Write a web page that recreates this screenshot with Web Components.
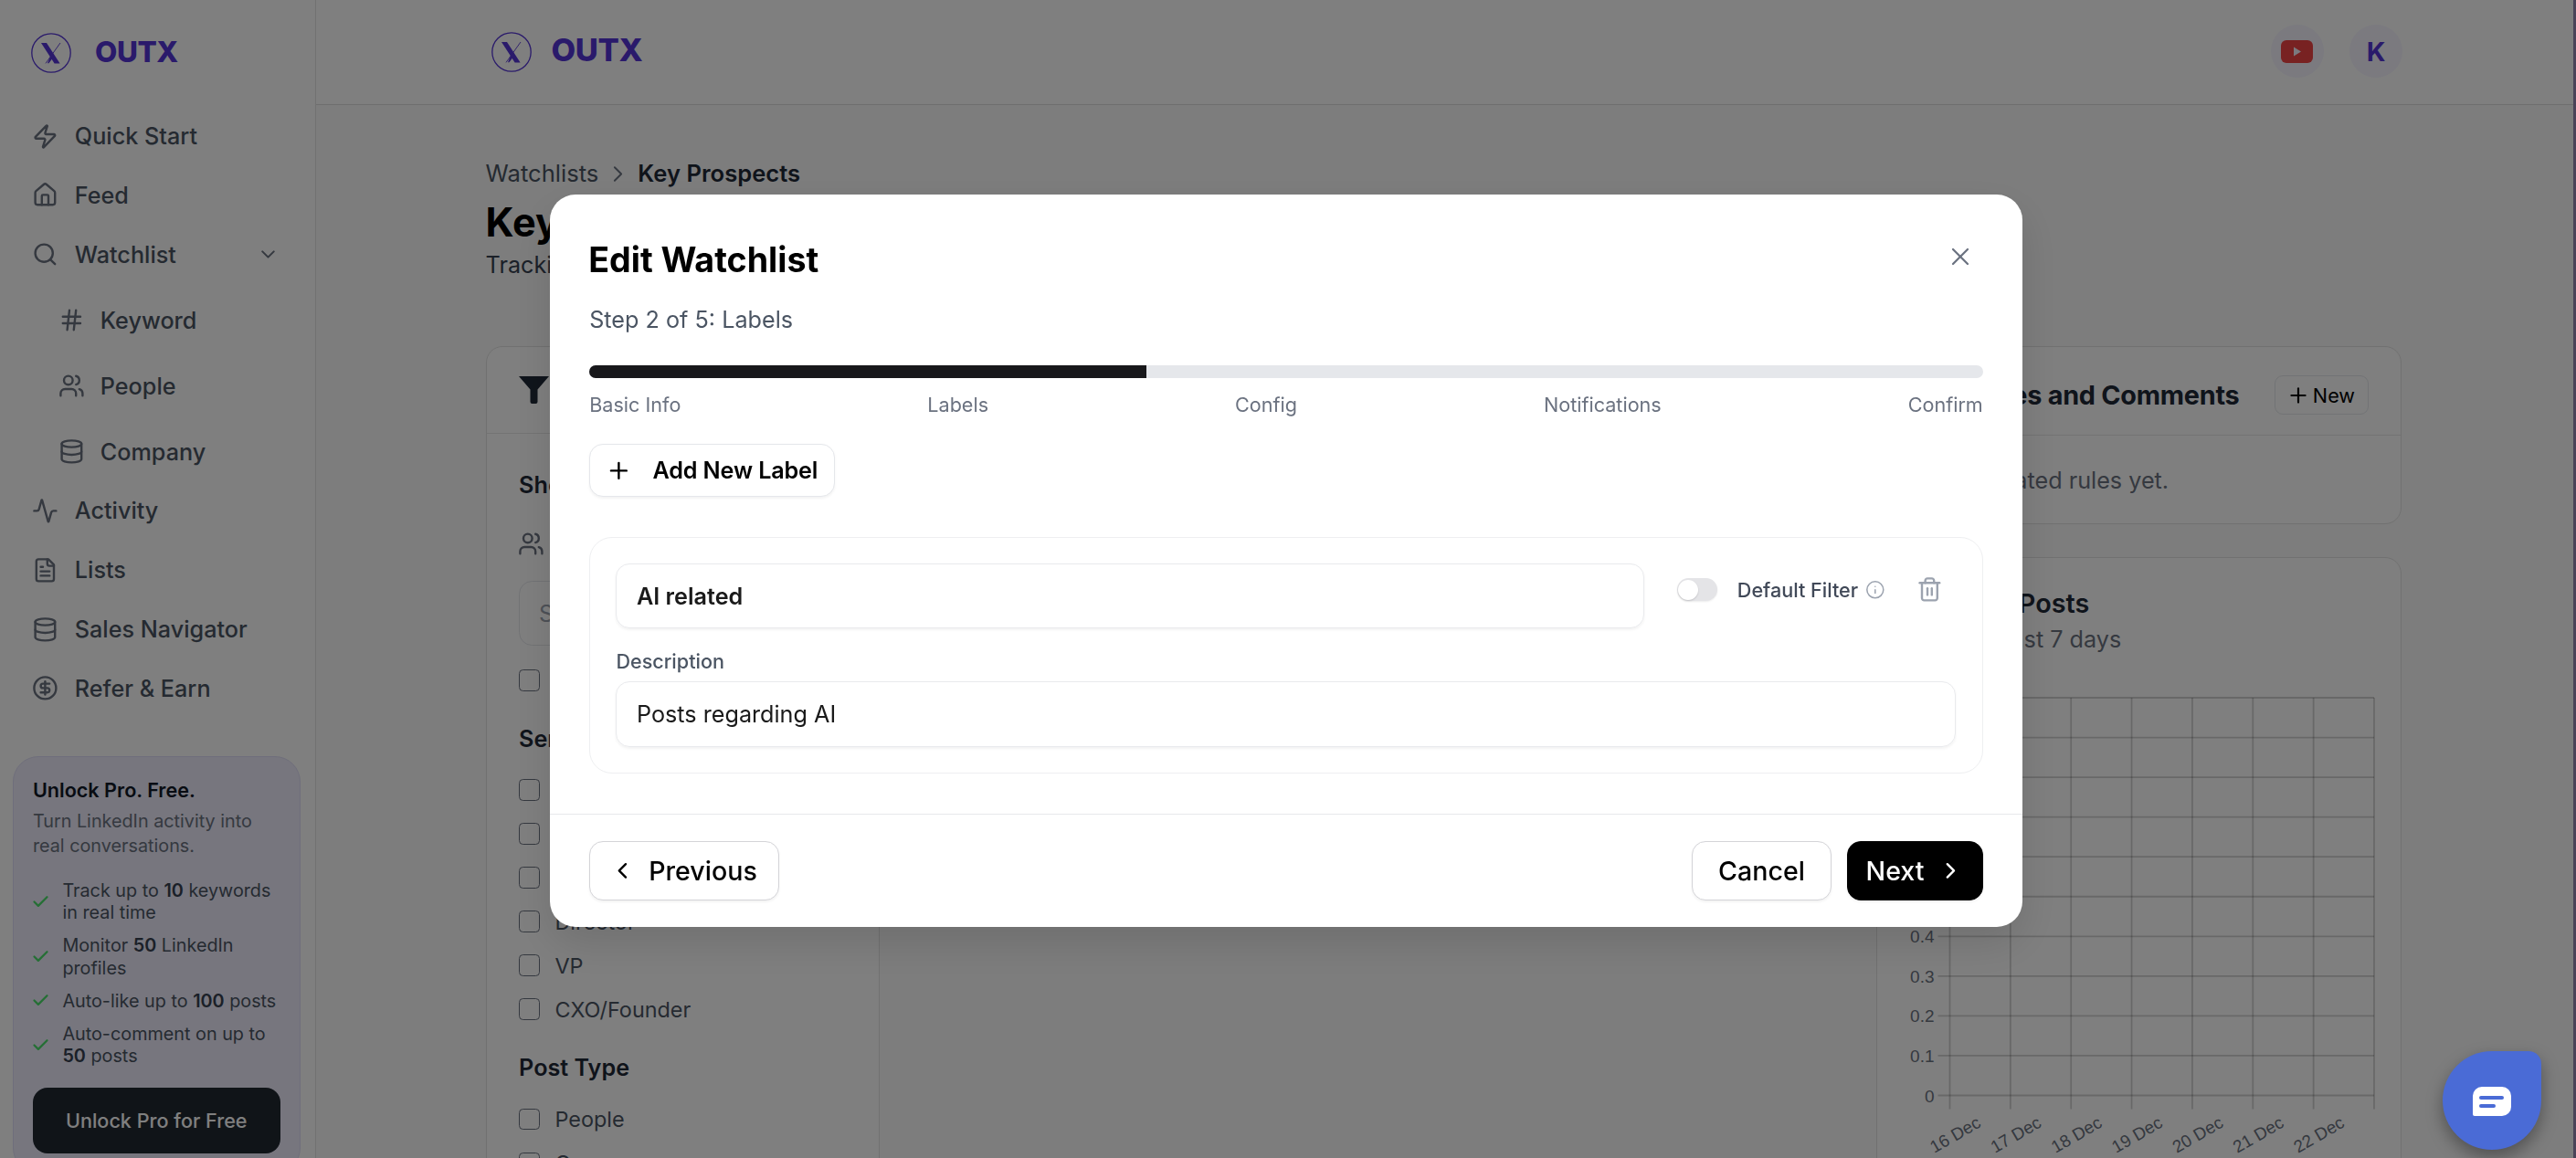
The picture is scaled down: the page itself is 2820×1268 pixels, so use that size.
<!DOCTYPE html>
<html lang="en">
  <head>
    <meta charset="UTF-8" />
    <title>OUTX - Edit Watchlist</title>
    <style>
      html, body { margin: 0; height: 100%; overflow: hidden; background: #fff; }
      body { font-family: Inter, "Noto Sans", sans-serif; }
      .shell { display: flex; height: 1268px; overflow: hidden; }
    </style>
  </head>
  <body>
    <div class="shell">
      <app-sidebar></app-sidebar>
      <main-area></main-area>
      <scroll-edge></scroll-edge>
    </div>
    <edit-modal></edit-modal>
    <chat-bubble></chat-bubble>

    <script>
      const ICONS = {
        zap: '<path d="M4 14a1 1 0 0 1-.78-1.63l9.9-10.2a.5.5 0 0 1 .86.46l-1.92 6.02A1 1 0 0 0 13 10h7a1 1 0 0 1 .78 1.63l-9.9 10.2a.5.5 0 0 1-.86-.46l1.92-6.02A1 1 0 0 0 11 14z"/>',
        house: '<path d="M15 21v-8a1 1 0 0 0-1-1h-4a1 1 0 0 0-1 1v8"/><path d="M3 10a2 2 0 0 1 .709-1.528l7-5.999a2 2 0 0 1 2.582 0l7 5.999A2 2 0 0 1 21 10v9a2 2 0 0 1-2 2H5a2 2 0 0 1-2-2z"/>',
        search: '<circle cx="11" cy="11" r="8"/><path d="m21 21-4.3-4.3"/>',
        down: '<path d="m6 9 6 6 6-6"/>',
        hash: '<line x1="4" x2="20" y1="9" y2="9"/><line x1="4" x2="20" y1="15" y2="15"/><line x1="10" x2="8" y1="3" y2="21"/><line x1="16" x2="14" y1="3" y2="21"/>',
        users: '<path d="M16 21v-2a4 4 0 0 0-4-4H6a4 4 0 0 0-4 4v2"/><circle cx="9" cy="7" r="4"/><path d="M22 21v-2a4 4 0 0 0-3-3.87"/><path d="M16 3.13a4 4 0 0 1 0 7.75"/>',
        database: '<ellipse cx="12" cy="5" rx="9" ry="3"/><path d="M3 5V19A9 3 0 0 0 21 19V5"/><path d="M3 12A9 3 0 0 0 21 12"/>',
        activity: '<path d="M22 12h-2.48a2 2 0 0 0-1.93 1.46l-2.35 8.36a.25.25 0 0 1-.48 0L9.24 2.18a.25.25 0 0 0-.48 0l-2.35 8.36A2 2 0 0 1 4.49 12H2"/>',
        file: '<path d="M15 2H6a2 2 0 0 0-2 2v16a2 2 0 0 0 2 2h12a2 2 0 0 0 2-2V7Z"/><path d="M14 2v4a2 2 0 0 0 2 2h4"/><path d="M10 9H8"/><path d="M16 13H8"/><path d="M16 17H8"/>',
        dollar: '<circle cx="12" cy="12" r="10"/><path d="M16 8h-6a2 2 0 1 0 0 4h4a2 2 0 1 1 0 4H8"/><path d="M12 18V6"/>',
        check: '<path d="M20 6 9 17l-5-5"/>',
        plus: '<path d="M5 12h14"/><path d="M12 5v14"/>',
        close: '<path d="M18 6 6 18"/><path d="m6 6 12 12"/>',
        info: '<circle cx="12" cy="12" r="10"/><path d="M12 16v-4"/><path d="M12 8h.01"/>',
        trash: '<path d="M3 6h18"/><path d="M19 6v14c0 1-1 2-2 2H7c-1 0-2-1-2-2V6"/><path d="M8 6V4c0-1 1-2 2-2h4c1 0 2 1 2 2v2"/><line x1="10" x2="10" y1="11" y2="17"/><line x1="14" x2="14" y1="11" y2="17"/>',
        left: '<path d="m15 18-6-6 6-6"/>',
        right: '<path d="m9 18 6-6-6-6"/>',
      }

      // small helper so every class below stays a few lines
      function define(name, css, html) {
        customElements.define(
          name,
          class extends HTMLElement {
            constructor() {
              super()
              const root = this.attachShadow({ mode: 'open' })
              root.innerHTML = `<style>${css}</style>${typeof html === 'function' ? html(this) : html}`
            }
          }
        )
      }

      // icon
      customElements.define(
        'ui-icon',
        class extends HTMLElement {
          connectedCallback() {
            if (this.shadowRoot) return
            const size = this.getAttribute('size') || 28.8
            const stroke = this.getAttribute('stroke') || 2
            this.attachShadow({ mode: 'open' }).innerHTML = `
              <style>:host { display: block; flex: none; width: ${size}px; height: ${size}px; } svg { display: block; }</style>
              <svg xmlns="http://www.w3.org/2000/svg" width="${size}" height="${size}" viewBox="0 0 24 24" fill="none"
                stroke="currentColor" stroke-width="${stroke}" stroke-linecap="round" stroke-linejoin="round">${ICONS[this.getAttribute('name')]}</svg>`
          }
        }
      )

      // logo
      define(
        'outx-logo',
        `:host { display: flex; align-items: center; color: #5535d6; }
         .name { font-weight: 800; letter-spacing: -0.4px; line-height: 1; }
         svg { display: block; flex: none; }`,
        (el) => `
          <svg width="44" height="44" viewBox="0 0 44 44" fill="none">
            <circle cx="22" cy="22" r="21.2" stroke="currentColor" stroke-width="1.3"/>
            <path d="M11 11h6l14.6 22.4h-6z" fill="currentColor"/>
            <path d="M32 11 16 33.4" stroke="currentColor" stroke-width=".9"/>
            <path d="M21.4 25 18 33.2h1.4l4-5.2z" fill="currentColor"/>
          </svg>
          <span class="name" style="font-size:${el.getAttribute('size')}px;margin-left:${el.getAttribute('gap')}px;margin-top:${el.getAttribute('lift')}px">OUTX</span>`
      )

      // sidebar row
      define(
        'nav-item',
        `:host { display: flex; align-items: center; gap: 18px; height: 64.8px; padding-left: 35px; font-size: 25.2px; font-weight: 500; color: #4b5563; }
         :host([sub]) { padding-left: 64px; margin-top: 7.2px; gap: 17px; }
         ui-icon { color: #6b7280; }
         .chev { margin-left: auto; margin-right: 39px; }`,
        (el) => `<ui-icon name="${el.getAttribute('icon')}"></ui-icon><slot></slot>
          ${el.hasAttribute('open') ? '<ui-icon class="chev" name="down" size="25"></ui-icon>' : ''}`
      )

      // bullet in the promo card
      define(
        'promo-item',
        `:host { display: flex; align-items: center; gap: 13px; margin-left: -1.5px; font-size: 19.8px; line-height: 24.5px; color: #4b5563; }
         ui-icon { color: #4ade6a; }
         ::slotted(b) { font-weight: 600; color: #374151; }`,
        `<ui-icon name="check" size="21" stroke="2.6"></ui-icon><span><slot></slot></span>`
      )

      define(
        'promo-card',
        `:host { display: block; margin: 41.6px 16px 0 14.4px; padding: 20px 21px 21.6px 20.5px; background: #eeedfc; border: 1.8px solid #dedcf6; border-radius: 28px; }
         h4 { margin: 0; font-size: 21.6px; line-height: 32px; font-weight: 600; color: #111827; }
         p { margin: 5.5px 0 0; font-size: 19.8px; line-height: 27px; color: #6b7280; }
         .list { display: flex; flex-direction: column; gap: 11.5px; margin-top: 22.5px; }
         .cta { margin-top: 22px; height: 72px; display: flex; align-items: center; justify-content: center; border-radius: 16px; background: #202831; color: #fff; font-size: 21.6px; font-weight: 500; }`,
        `<h4>Unlock Pro. Free.</h4>
         <p>Turn LinkedIn activity into real conversations.</p>
         <div class="list">
           <promo-item>Track up to <b>10</b> keywords in real time</promo-item>
           <promo-item>Monitor <b>50</b> LinkedIn profiles</promo-item>
           <promo-item>Auto-like up to <b>100</b> posts</promo-item>
           <promo-item>Auto-comment on up to <b>50</b> posts</promo-item>
         </div>
         <div class="cta">Unlock Pro for Free</div>`
      )

      define(
        'app-sidebar',
        `:host { display: block; flex: none; box-sizing: border-box; width: 345.6px; height: 1268px; overflow: hidden; background: #fff; border-right: 1.8px solid #e4e4e4; }
         outx-logo { height: 116.6px; padding-left: 34px; box-sizing: border-box; }`,
        `<outx-logo size="31.5" gap="26" lift="-3"></outx-logo>
         <nav-item icon="zap">Quick Start</nav-item>
         <nav-item icon="house">Feed</nav-item>
         <nav-item icon="search" open>Watchlist</nav-item>
         <nav-item icon="hash" sub>Keyword</nav-item>
         <nav-item icon="users" sub>People</nav-item>
         <nav-item icon="database" sub>Company</nav-item>
         <nav-item icon="activity">Activity</nav-item>
         <nav-item icon="file">Lists</nav-item>
         <nav-item icon="database">Sales Navigator</nav-item>
         <nav-item icon="dollar">Refer &amp; Earn</nav-item>
         <promo-card></promo-card>`
      )

      define(
        'app-header',
        `:host { display: flex; align-items: center; justify-content: space-between; box-sizing: border-box; height: 115px; padding: 0 187px 0 192px; background: #fff; border-bottom: 1.8px solid #dedede; }
         .right { display: flex; gap: 28.8px; }
         .round { width: 57.6px; height: 57.6px; border-radius: 50%; background: #f6f5fe; display: flex; align-items: center; justify-content: center; color: #5535d6; font-size: 28.8px; font-weight: 700; margin-top: -2px; }
         svg { display: block; }`,
        `<outx-logo size="34.5" gap="22" lift="-4"></outx-logo>
         <div class="right">
           <div class="round">
             <svg width="35" height="25" viewBox="0 0 35 25"><rect width="35" height="25" rx="6" fill="#f04444"/><path d="M14 7.5v10l8-5z" fill="#f6f5fe"/></svg>
           </div>
           <div class="round">K</div>
         </div>`
      )

      define(
        'check-row',
        `:host { display: flex; align-items: center; gap: 16px; height: 36px; font-size: 23.4px; color: #4b5563; }
         i { display: block; flex: none; box-sizing: border-box; width: 23.4px; height: 23.4px; border: 1.8px solid #6b7280; border-radius: 4.5px; background: #fff; }`,
        `<i></i><slot></slot>`
      )

      define(
        'filter-panel',
        `:host { display: block; flex: none; box-sizing: border-box; width: 431px; height: 1000px; background: #fff; border: 1.8px solid #e2e2e2; border-radius: 18px; }
         .top { display: flex; align-items: center; gap: 16px; height: 95px; box-sizing: border-box; padding-left: 35px; border-bottom: 1.8px solid #e6e6e6; color: #1f2937; font-size: 28.8px; font-weight: 600; }
         svg { display: block; }
         .body { padding: 38px 35px 0 35.5px; }
         h5 { margin: 0; font-size: 25.2px; line-height: 36px; font-weight: 600; color: #1f2937; }
         .who { display: flex; align-items: center; gap: 12px; height: 36px; margin-top: 28px; font-size: 25.2px; color: #4b5563; }
         .who ui-icon { color: #6b7280; margin-left: -1px; }
         .input { margin-top: 23px; height: 71px; box-sizing: border-box; display: flex; align-items: center; padding-left: 21px; border: 1.8px solid #e5e7eb; border-radius: 14.4px; font-size: 25.2px; color: #9ca3af; }
         .stack { display: flex; flex-direction: column; gap: 12px; margin-top: 20px; }
         h5.gap { margin-top: 28px; }`,
        `<div class="top">
           <svg width="33" height="30" viewBox="0 0 33 30"><path d="M0 0h33L20.5 14.5V28a2 2 0 0 1-2 2h-4a2 2 0 0 1-2-2V14.5z" fill="#1f2937"/></svg>
           Filters
         </div>
         <div class="body">
           <h5>Show</h5>
           <div class="who"><ui-icon name="users"></ui-icon>People</div>
           <div class="input">Search</div>
           <div class="stack"><check-row>All</check-row></div>
           <h5 class="gap">Seniority</h5>
           <div class="stack">
             <check-row>Entry</check-row>
             <check-row>Senior</check-row>
             <check-row>Manager</check-row>
             <check-row>Director</check-row>
             <check-row>VP</check-row>
             <check-row>CXO/Founder</check-row>
           </div>
           <h5 class="gap">Post Type</h5>
           <div class="stack" style="margin-top:20.5px">
             <check-row>People</check-row>
             <check-row>Company</check-row>
           </div>
         </div>`
      )

      define(
        'rules-card',
        `:host { display: block; box-sizing: border-box; background: #fff; border: 1.8px solid #e2e2e2; border-radius: 18px; }
         .top { display: flex; align-items: center; justify-content: space-between; height: 97.2px; box-sizing: border-box; padding: 9px 35px 0; border-bottom: 1.8px solid #e6e6e6; }
         h3 { margin: 0; font-size: 28.8px; font-weight: 700; letter-spacing: -0.25px; color: #1f2937; white-space: nowrap; }
         .new { display: flex; align-items: center; gap: 3px; height: 43.2px; box-sizing: border-box; padding: 0 14px 0 12px; border: 1.8px solid #e5e7eb; border-radius: 9px; font-size: 21.6px; font-weight: 400; color: #000; }
         .none { padding: 31px 35px 29px; font-size: 25.2px; line-height: 36px; color: #6b7280; white-space: nowrap; }`,
        `<div class="top"><h3>Auto Likes and Comments</h3>
           <div class="new"><ui-icon name="plus" size="26"></ui-icon>New</div>
         </div>
         <div class="none">No automated rules yet.</div>`
      )

      define(
        'posts-card',
        `:host { display: block; box-sizing: border-box; height: 760px; padding-top: 30px; background: #fff; border: 1.8px solid #e2e2e2; border-radius: 18px; }
         h3 { margin: 0; padding-left: 35px; font-size: 28.8px; line-height: 40px; font-weight: 600; color: #1f2937; }
         p { margin: 1px 0 0; padding-left: 28px; font-size: 25.2px; line-height: 36px; color: #6b7280; }
         svg { display: block; margin-top: 12px; }`,
        () => {
          // plot box inside the svg
          const x0 = 79.5, x1 = 544, y0 = 34, y1 = 469.5
          const rows = 10, cols = 7
          const dx = (x1 - x0) / cols, dy = (y1 - y0) / rows
          let grid = '', labels = ''
          for (let i = 0; i <= rows; i++) {
            const y = y0 + i * dy
            grid += `<line x1="${x0 - 13}" x2="${x1}" y1="${y}" y2="${y}"/>`
            const v = (rows - i) / 10
            labels += `<text x="${x0 - 17}" y="${y + 7}" text-anchor="end">${v === 0 ? '0' : v === 1 ? '1.0' : v.toFixed(1)}</text>`
          }
          for (let i = 0; i <= cols; i++) {
            const x = x0 + i * dx
            grid += `<line x1="${x}" x2="${x}" y1="${y0}" y2="${y1 + 15}"/>`
            if (i < cols) labels += `<text transform="translate(${x + dx / 2 + 2} 503) rotate(-30)" text-anchor="end">${16 + i} Dec</text>`
          }
          return `<h3>Tracked Posts</h3><p>From the last 7 days</p>
            <svg width="575" height="540" viewBox="0 0 575 540">
              <g stroke="#000" stroke-opacity=".18" stroke-width="1.8">${grid}</g>
              <g font-family="'Liberation Sans', Arial, sans-serif" font-size="19" fill="#6b7280">${labels}</g>
            </svg>`
        }
      )

      define(
        'main-area',
        `:host { display: block; flex: 1; min-width: 0; height: 1268px; overflow: hidden; background: #fafbfa; }
         .page { padding: 57px 188px 0 186px; }
         .crumb { display: flex; align-items: center; gap: 7px; font-size: 25.6px; line-height: 36px; color: #4b5563; }
         .crumb b { font-weight: 600; color: #1f2937; }
         .crumb ui-icon { color: #6b7280; }
         h1 { margin: 8px 0 0; font-size: 43.2px; line-height: 54px; font-weight: 700; color: #000; }
         .sub { margin: 2px 0 0; font-size: 25.2px; line-height: 36px; color: #374151; }
         .cols { display: flex; justify-content: space-between; margin-top: 71px; }
         .right { display: flex; flex-direction: column; gap: 36px; width: 575px; flex: none; }`,
        `<app-header></app-header>
         <div class="page">
           <div class="crumb">Watchlists<ui-icon name="right" size="29" stroke="1.6"></ui-icon><b>Key Prospects</b></div>
           <h1>Key Prospects</h1>
           <p class="sub">Tracking</p>
           <div class="cols">
             <filter-panel></filter-panel>
             <div class="right"><rules-card></rules-card><posts-card></posts-card></div>
           </div>
         </div>`
      )

      define('scroll-edge', `:host { display: block; flex: none; width: 3px; background: #9486b0; }`, ``)

      // buttons of the modal
      define(
        'ui-button',
        `:host { display: inline-flex; align-items: center; box-sizing: border-box; height: 64.8px; padding: 0 21px; border: 1.8px solid #d4d4d8; border-radius: 15px; background: #fff; color: #000; font-size: 28.6px; font-weight: 500; box-shadow: 0 1.8px 3px rgba(0,0,0,.05); white-space: nowrap; }
         :host([dark]) { background: #000; border-color: #000; color: #fff; }
         :host([small]) { height: 57.6px; font-size: 25.2px; font-weight: 600; letter-spacing: -0.15px; padding: 0 18px 0 17px; border-color: #e5e7eb; }`,
        `<slot></slot>`
      )

      define(
        'label-card',
        `:host { display: block; margin-top: 43.6px; padding: 28.2px 29px 28.2px 28.2px; border: 1.8px solid #eeeff1; border-radius: 25px; }
         .row { display: flex; align-items: flex-start; }
         .field { box-sizing: border-box; height: 71.5px; display: flex; align-items: center; padding-left: 21.6px; border: 1.8px solid #e9eaed; border-radius: 15px; font-size: 25.2px; color: #1a1a1a; box-shadow: 0 1.8px 3px rgba(0,0,0,.05); }
         .name { flex: 1; font-weight: 600; }
         .tools { display: flex; align-items: center; width: 341px; flex: none; box-sizing: border-box; padding: 11px 0 0 36px; height: 47px; }
         .switch { flex: none; width: 44px; height: 25px; border-radius: 13px; background: #e4e4e7; display: flex; align-items: center; padding-left: 1px; box-sizing: border-box; box-shadow: 0 1px 2px rgba(0,0,0,.08); }
         .switch i { display: block; width: 22px; height: 22px; border-radius: 50%; background: #fff; box-shadow: 0 1px 2px rgba(0,0,0,.15); }
         .txt { margin-left: 22px; font-size: 21.6px; font-weight: 500; color: #414958; white-space: nowrap; }
         .tools ui-icon { color: #9ca3af; }
         .info { margin-left: 8px; margin-right: -1.5px; }
         .trash { margin-left: 36px; }
         .cap { margin-top: 22px; font-size: 21.6px; line-height: 29px; font-weight: 500; color: #4b5563; height: 36px; }`,
        `<div class="row">
           <div class="field name">AI related</div>
           <div class="tools">
             <div class="switch"><i></i></div>
             <span class="txt">Default Filter</span>
             <ui-icon class="info" name="info" size="21.6" stroke="1.7"></ui-icon>
             <ui-icon class="trash" name="trash" size="28.8" stroke="2"></ui-icon>
           </div>
         </div>
         <div class="cap">Description</div>
         <div class="field">Posts regarding AI</div>`
      )

      define(
        'edit-modal',
        `:host { position: fixed; inset: 0; display: flex; justify-content: center; align-items: flex-start; box-sizing: border-box; padding: 213px 4px 0 0; background: rgba(0,0,0,.5); }
         .box { box-sizing: border-box; width: 1612px; height: 802px; background: #fff; border-radius: 28px; box-shadow: 0 18px 45px rgba(0,0,0,.12); display: flex; flex-direction: column; }
         .inner { flex: 1; padding: 47px 43.2px 0; }
         .head { display: flex; justify-content: space-between; align-items: flex-start; }
         h2 { margin: 0 0 0 -1px; font-size: 37.6px; line-height: 50px; font-weight: 700; color: #000; }
         .close { margin: 5px 9px 0 0; color: #6b7280; }
         .step { margin: 22px 0 0; font-size: 25.2px; line-height: 36px; color: #4b5563; }
         .bar { margin-top: 32px; height: 14.4px; border-radius: 7.2px; background: #e5e7eb; overflow: hidden; }
         .bar i { display: block; width: 40%; height: 100%; background: #18181b; }
         .steps { display: flex; justify-content: space-between; margin-top: 13px; font-size: 21.6px; line-height: 32px; color: #6b7280; }
         .add { margin-top: 27px; }
         .add ui-icon { margin-right: 22.5px; }
         .foot { height: 124px; box-sizing: border-box; border-top: 1.8px solid #e7e8eb; padding: 29px 43.2px 0; display: flex; justify-content: space-between; }
         .foot .end { display: flex; gap: 17px; }
         .prev ui-icon { margin-right: 14.2px; }
         .prev { padding-right: 22.8px; }
         .next { padding: 0 20px 0 19.5px; }
         .next ui-icon { margin-left: 14.5px; }
         .cancel { padding: 0 28px; }`,
        `<div class="box">
           <div class="inner">
             <div class="head"><h2>Edit Watchlist</h2><ui-icon class="close" name="close" size="32" stroke="1.7"></ui-icon></div>
             <p class="step">Step 2 of 5: Labels</p>
             <div class="bar"><i></i></div>
             <div class="steps"><span>Basic Info</span><span>Labels</span><span>Config</span><span>Notifications</span><span>Confirm</span></div>
             <div class="add"><ui-button small><ui-icon name="plus" size="28.8"></ui-icon>Add New Label</ui-button></div>
             <label-card></label-card>
           </div>
           <div class="foot">
             <ui-button class="prev"><ui-icon name="left"></ui-icon>Previous</ui-button>
             <div class="end">
               <ui-button class="cancel">Cancel</ui-button>
               <ui-button class="next" dark>Next<ui-icon name="right"></ui-icon></ui-button>
             </div>
           </div>
         </div>`
      )

      define(
        'chat-bubble',
        `:host { position: fixed; right: 38px; bottom: 9px; width: 108px; height: 108px; border-radius: 50% 14px 50% 50%; background: #4a6bd6; box-shadow: 0 8px 18px rgba(0,0,0,.35); display: flex; align-items: center; justify-content: center; }
         svg { display: block; margin-top: 1px; margin-right: 1px; }`,
        `<svg width="42" height="32" viewBox="0 0 42 32">
           <path d="M0 10a10 10 0 0 1 10-10h22a10 10 0 0 1 10 10v12a10 10 0 0 1-10 10H2a2 2 0 0 1-2-2z" fill="#fff"/>
           <rect x="7" y="10" width="27" height="4" rx="2" fill="#4a6bd6"/>
           <rect x="7" y="19" width="18" height="4" rx="2" fill="#4a6bd6"/>
         </svg>`
      )
    </script>
  </body>
</html>
